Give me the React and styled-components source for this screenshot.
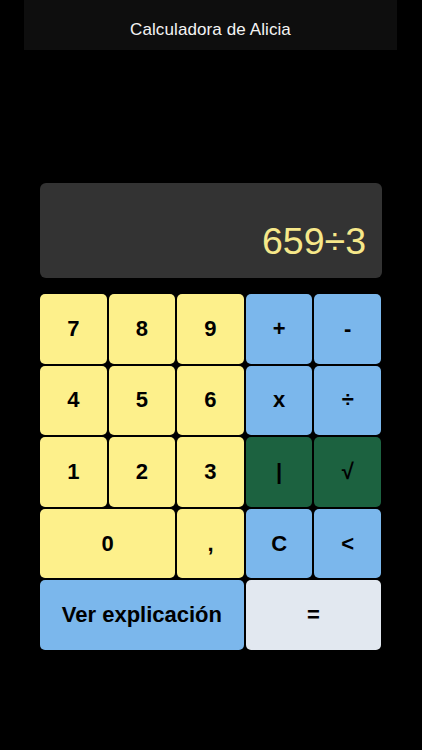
import React from "react";
import styled, { createGlobalStyle } from "styled-components";

const Global = createGlobalStyle`
  html, body { margin: 0; padding: 0; background: #000; }
  body { font-family: "Liberation Sans", Arial, sans-serif; width: 422px; height: 750px; overflow: hidden; }
`;

const Page = styled.div`
  width: 422px;
  height: 750px;
  background: #000;
  display: flex;
  flex-direction: column;
  align-items: center;
`;

const Header = styled.header`
  width: 373px;
  height: 50px;
  margin-left: -1px;
  background: #0e0e0e;
  display: flex;
  align-items: center;
  justify-content: center;
  padding-top: 9px;
  box-sizing: border-box;
  color: #f4f4f4;
  font-size: 17px;
  letter-spacing: 0.1px;
`;

const Display = styled.div`
  margin-top: 133px;
  width: 342px;
  height: 95px;
  background: #333333;
  border-radius: 6px;
  box-sizing: border-box;
  display: flex;
  align-items: flex-end;
  justify-content: flex-end;
  padding: 0 16px 18px 0;
  color: #f6e88a;
  font-size: 37.5px;
  line-height: 1;
`;

const Pad = styled.div`
  margin-top: 16px;
  width: 341px;
  margin-left: -1px;
  display: grid;
  grid-template-columns: repeat(5, 1fr);
  grid-auto-rows: 69.6px;
  gap: 2px;
`;

const colors = {
  num: "#fdf08b",
  op: "#7bb7ec",
  fn: "#1c6240",
  eq: "#e2e8f0",
};

const Key = styled.button`
  grid-column: span ${(p) => p.$span || 1};
  background: ${(p) => colors[p.$kind]};
  border: none;
  border-radius: 5px;
  margin: 0;
  padding: 0;
  font-family: "Liberation Sans", Arial, sans-serif;
  font-weight: bold;
  font-size: 22px;
  color: #000;
  display: flex;
  align-items: center;
  justify-content: center;
`;

const keys = [
  ["7", "num"], ["8", "num"], ["9", "num"], ["+", "op"], ["-", "op"],
  ["4", "num"], ["5", "num"], ["6", "num"], ["x", "op"], ["÷", "op"],
  ["1", "num"], ["2", "num"], ["3", "num"], ["|", "fn"], ["√", "fn"],
  ["0", "num", 2], [",", "num"], ["C", "op"], ["<", "op"],
  ["Ver explicación", "op", 3], ["=", "eq", 2],
];

export default function App() {
  return (
    <Page>
      <Global />
      <Header>Calculadora de Alicia</Header>
      <Display>659÷3</Display>
      <Pad>
        {keys.map(([label, kind, span], i) => (
          <Key key={i} $kind={kind} $span={span}>
            {label}
          </Key>
        ))}
      </Pad>
    </Page>
  );
}
